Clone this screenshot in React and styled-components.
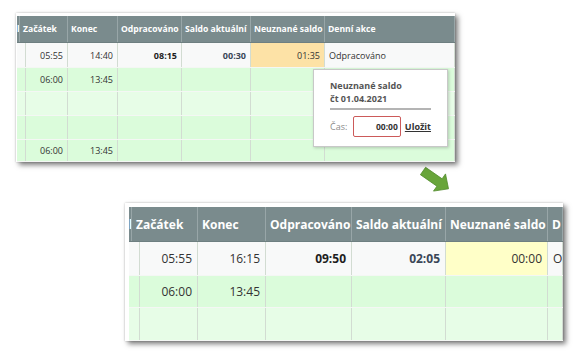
import React from "react";
import styled, { createGlobalStyle, css } from "styled-components";

const Global = createGlobalStyle`
  html, body { margin: 0; padding: 0; background: #ffffff; }
  body { font-family: "Open Sans", "Liberation Sans", sans-serif; width: 582px; height: 359px; overflow: hidden; }
`;

const Page = styled.div`
  display: flex;
  flex-direction: column;
  align-items: flex-start;
  padding-top: 13px;
`;

const Card = styled.div`
  position: relative;
  margin-left: ${(p) => p.$left}px;
  background: #ffffff;
  border-top: ${(p) => p.$bt}px solid #ffffff;
  border-left: ${(p) => p.$bl}px solid #ffffff;
  box-shadow: 3px 3px 5px rgba(0, 0, 0, 0.5), 0 0 2px rgba(0, 0, 0, 0.25);
`;

const Grid = styled.div`
  display: grid;
  grid-template-columns: ${(p) => p.$cols};
  overflow: hidden;
`;

const Row = styled.div`
  display: grid;
  grid-column: 1 / -1;
  grid-template-columns: subgrid;
  height: ${(p) => p.$h}px;
  background: ${(p) => p.$bg};
  border-bottom: 1px solid ${(p) => (p.$head ? "#6e7f81" : "#f4f7f4")};
  box-sizing: border-box;
`;

const HeadCell = styled.div`
  display: flex;
  align-items: center;
  padding-left: ${(p) => p.$pad}px;
  font-size: ${(p) => p.$fs}px;
  font-weight: 700;
  color: #ffffff;
  white-space: nowrap;
  overflow: hidden;
  border-right: 1px solid #98a6a8;
  box-sizing: border-box;
`;

const Cell = styled.div`
  display: flex;
  align-items: center;
  justify-content: ${(p) => (p.$align === "left" ? "flex-start" : "flex-end")};
  padding: 0 ${(p) => p.$pad}px;
  font-size: ${(p) => p.$fs}px;
  white-space: nowrap;
  overflow: hidden;
  color: #333333;
  background: ${(p) => p.$bg || "transparent"};
  border-right: 1px solid #d2dcd2;
  box-sizing: border-box;
  ${(p) =>
    p.$kind === "bold" &&
    css`
      font-weight: 700;
      color: #1e1e1e;
    `}
  ${(p) =>
    p.$kind === "saldo" &&
    css`
      font-weight: 700;
      color: #3a4758;
    `}
`;

const Popup = styled.div`
  position: absolute;
  left: 296px;
  top: 53px;
  width: 135px;
  height: 78px;
  box-sizing: border-box;
  background: #ffffff;
  border: 1px solid #c8c8c8;
  box-shadow: 1px 1px 3px rgba(0, 0, 0, 0.2);
  padding: 9px 16px 0 16px;
  display: flex;
  flex-direction: column;
`;

const PopTitle = styled.div`
  font-size: 9px;
  font-weight: 700;
  line-height: 13px;
  color: #555555;
  padding-bottom: 3px;
  border-bottom: 2px solid #b4b4b4;
`;

const PopForm = styled.div`
  display: flex;
  align-items: center;
  margin-top: 6px;
  font-size: 9px;
`;

const Label = styled.span`
  color: #8a8a8a;
  width: 23px;
`;

const TimeInput = styled.div`
  width: 49px;
  height: 21px;
  box-sizing: border-box;
  border: 1px solid #cc5a5a;
  border-radius: 2px;
  display: flex;
  align-items: center;
  justify-content: flex-end;
  padding-right: 2px;
  font-weight: 700;
  font-size: 8.5px;
  color: #333333;
`;

const SaveLink = styled.span`
  margin-left: 4px;
  font-weight: 700;
  color: #333333;
  text-decoration: underline;
`;

const ArrowBox = styled.svg`
  margin-left: 415px;
  display: block;
  width: 40px;
  height: 41px;
`;

const COLORS = {
  white: "#f8f9f9",
  green: "#dbfcdb",
  light: "#e7fde7",
};

function Table({ cols, headers, rows, fs, hfs, headH, pad }) {
  return (
    <Grid $cols={cols}>
      <Row $h={headH} $bg="#7a8b8d" $head>
        {headers.map((h, i) => (
          <HeadCell key={i} $fs={hfs} $pad={i === 0 ? 0 : pad - 1}>
            {h}
          </HeadCell>
        ))}
      </Row>
      {rows.map((r, ri) => (
        <Row key={ri} $h={r.h} $bg={COLORS[r.bg]}>
          {r.cells.map((c, ci) => (
            <Cell
              key={ci}
              $fs={fs}
              $pad={pad}
              $align={c.align}
              $kind={c.kind}
              $bg={c.bg}
            >
              {c.t}
            </Cell>
          ))}
        </Row>
      ))}
    </Grid>
  );
}

const empty = (n) => Array.from({ length: n }, () => ({ t: "" }));

const topHeaders = ["l", "Začátek", "Konec", "Odpracováno", "Saldo aktuální", "Neuznané saldo", "Denní akce"];
const topRows = [
  {
    h: 25,
    bg: "white",
    cells: [
      { t: "" },
      { t: "05:55" },
      { t: "14:40" },
      { t: "08:15", kind: "bold" },
      { t: "00:30", kind: "saldo" },
      { t: "01:35", bg: "#fde2a6" },
      { t: "Odpracováno", align: "left" },
    ],
  },
  { h: 24, bg: "green", cells: [{ t: "" }, { t: "06:00" }, { t: "13:45" }, ...empty(4)] },
  { h: 24, bg: "light", cells: empty(7) },
  { h: 24, bg: "green", cells: empty(7) },
  { h: 22, bg: "green", cells: [{ t: "" }, { t: "06:00" }, { t: "13:45" }, ...empty(4)] },
];

const botHeaders = ["l", "Začátek", "Konec", "Odpracováno", "Saldo aktuální", "Neuznané saldo", "D"];
const botRows = [
  {
    h: 34,
    bg: "white",
    cells: [
      { t: "" },
      { t: "05:55" },
      { t: "16:15" },
      { t: "09:50", kind: "bold" },
      { t: "02:05", kind: "saldo" },
      { t: "00:00", bg: "#ffffc8" },
      { t: "O", align: "left" },
    ],
  },
  { h: 32, bg: "green", cells: [{ t: "" }, { t: "06:00" }, { t: "13:45" }, ...empty(4)] },
  { h: 33, bg: "light", cells: empty(7) },
];

export default function App() {
  return (
    <>
      <Global />
      <Page>
        <Card $left={16} $bt={3} $bl={1}>
          <Table
            cols="3px 48px 50px 64px 69px 74px 130px"
            headers={topHeaders}
            rows={topRows}
            fs={9}
            hfs={8.6}
            headH={27}
            pad={4}
          />
          <Popup>
            <PopTitle>
              Neuznané saldo
              <br />
              čt 01.04.2021
            </PopTitle>
            <PopForm>
              <Label>Čas:</Label>
              <TimeInput>00:00</TimeInput>
              <SaveLink>Uložit</SaveLink>
            </PopForm>
          </Popup>
        </Card>
        <ArrowBox viewBox="0 0 40 41">
          <polygon
            points="10.6,5.3 27.1,16.8 30.5,11.9 33.5,26.8 18.5,29.1 21.9,24.2 5.4,12.7"
            fill="#68a53a"
            stroke="#4f8a2a"
            strokeWidth="0.8"
            strokeLinejoin="round"
          />
        </ArrowBox>
        <Card $left={125} $bt={4} $bl={4}>
          <Table
            cols="3px 66px 68px 86px 94px 102px 15px"
            headers={botHeaders}
            rows={botRows}
            fs={12}
            hfs={12}
            headH={35}
            pad={5}
          />
        </Card>
      </Page>
    </>
  );
}
